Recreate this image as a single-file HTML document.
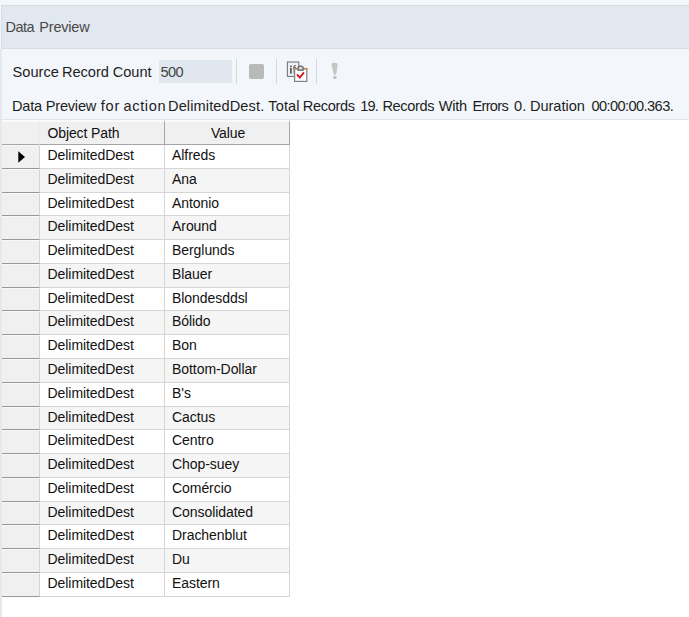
<!DOCTYPE html>
<html><head><meta charset="utf-8"><title>Data Preview</title>
<style>
html,body{margin:0;padding:0;}
body{width:689px;height:617px;overflow:hidden;background:#f3f6fa;font-family:"Liberation Sans",sans-serif;position:relative;}
.title{position:absolute;left:1px;top:5px;width:688px;height:44px;background:#e2e8f0;border-left:1px solid #d5dce4;border-top:1px solid #d7dde5;border-bottom:1px solid #d7dde5;box-sizing:border-box;}
.tool{position:absolute;left:1px;top:49px;width:688px;height:71px;background:#f3f6fa;border-left:1px solid #d5dce4;border-bottom:1px solid #e1e6ec;box-sizing:border-box;}
.lbl{position:absolute;left:12px;top:62.5px;font-size:14.6px;line-height:18px;color:#1e1e1e;white-space:nowrap;}
.inp{position:absolute;left:159px;top:60px;width:73px;height:23px;background:#e0e7ef;}
.inp span{position:absolute;left:1.5px;top:2.5px;font-size:14.6px;line-height:18px;color:#444;letter-spacing:-0.6px;}
.sep{position:absolute;top:59px;width:1px;height:25px;background:#d4d9df;}
.stop{position:absolute;left:249px;top:64px;width:15px;height:15px;background:#b9b9b9;border-radius:2px;}
.w{position:absolute;font-size:14.6px;line-height:18px;color:#1e1e1e;white-space:nowrap;}
.t{font-size:14.5px;color:#484848;}
.status{position:absolute;left:12px;top:96.5px;font-size:14.6px;line-height:18px;color:#1e1e1e;white-space:nowrap;letter-spacing:-0.12px;}
.grid{position:absolute;left:2px;top:120px;width:687px;height:497px;background:#fff;}
.gl{position:absolute;left:0;top:49px;width:2px;height:568px;background:#e4e9ef;}
.hdr{position:absolute;left:0;top:0;height:25px;width:288px;}
.hdr div{position:absolute;top:0;height:25px;box-sizing:border-box;background:#f0f0f0;border-top:2px solid #fafafa;border-right:1px solid #a6a6a6;border-bottom:1px solid #a6a6a6;font-size:14px;line-height:22px;color:#111;letter-spacing:-0.12px;}
.hdr .h0{left:0;width:38px;border-right-color:#ececec;}
.h1{left:38px;width:125px;padding-left:7.5px;}
.h2{left:163px;width:125px;text-align:center;padding-left:2px;}
.r{position:absolute;left:0;width:288px;}
.rh{position:absolute;left:0;top:0;width:38px;height:100%;box-sizing:border-box;background:#f0f0f0;border-top:1px solid #f9f9f9;border-right:1px solid #d4d4d4;border-bottom:1px solid #989898;}
.c{position:absolute;top:0;height:100%;box-sizing:border-box;border-right:1px solid #d6d6d6;border-bottom:1px solid #d6d6d6;font-size:14px;color:#111;letter-spacing:-0.06px;white-space:nowrap;background:#fff;}
.alt .c{background:#f5f5f5;}
.c1{left:38px;width:125px;padding-left:7.5px;}
.c2{left:163px;width:125px;padding-left:7px;}
.arr{position:absolute;left:15.5px;top:5px;}
</style></head><body>
<div class="title"></div><span class="w t" style="left:5.52px;top:18px;letter-spacing:-0.52px">Data</span><span class="w t" style="left:39.32px;top:18px;letter-spacing:-0.21px">Preview</span>
<div class="tool"></div>
<div class="gl"></div>
<span class="w" style="left:12.52px;top:62.5px;letter-spacing:0.03px">Source</span><span class="w" style="left:61.91px;top:62.5px;letter-spacing:-0.01px">Record</span><span class="w" style="left:112.77px;top:62.5px;letter-spacing:-0.04px">Count</span>
<div class="inp"><span>500</span></div>
<div class="sep" style="left:236px"></div>
<div class="stop"></div>
<div class="sep" style="left:276px"></div>
<div class="sep" style="left:315.5px"></div>
<svg style="position:absolute;left:280px;top:55px" width="65" height="35" viewBox="0 0 65 35">
<rect x="7.4" y="7" width="11.4" height="14.4" fill="#eef0f2" stroke="#737c86" stroke-width="1.1"/>
<rect x="10" y="13" width="1.8" height="5.6" fill="#5a5f66"/><rect x="10" y="10.6" width="1.8" height="1.6" fill="#5a5f66"/>
<path d="M14.2 18.6 V11.6 Q14.2 10.6 15.8 10.8 M13 13 H16" stroke="#6a7078" stroke-width="1.3" fill="none"/>
<rect x="14.6" y="13.6" width="12.2" height="12.8" fill="#fdfdfd" stroke="#7c848c" stroke-width="1.2"/>
<rect x="14.1" y="12.9" width="3.6" height="1.7" fill="#c88a4a"/><rect x="23.7" y="12.9" width="3.6" height="1.7" fill="#c88a4a"/>
<path d="M18 15.2 V13.2 Q18 11.2 20.6 11.2 Q23.2 11.2 23.2 13.2 V15.2 Z" fill="#d4d8dc" stroke="#5c626a" stroke-width="1.2"/>
<path d="M17 19.3 L19.8 22.6 L24 17.4" stroke="#d81820" stroke-width="1.9" fill="none"/>
<path d="M51.5 9.6 Q51.5 7.8 54.6 7.8 Q57.7 7.8 57.7 9.6 L56.3 19.2 Q55 20.3 53.6 19.2 Z" fill="#c6c6c6"/>
<ellipse cx="54.9" cy="22.4" rx="1.8" ry="1.5" fill="#bdbdbd"/>
</svg>
<span class="w" style="left:12.01px;top:97px;letter-spacing:-0.23px">Data</span><span class="w" style="left:45.71px;top:97px;letter-spacing:-0.21px">Preview</span><span class="w" style="left:100.81px;top:97px;letter-spacing:0.74px">for</span><span class="w" style="left:123.51px;top:97px;letter-spacing:0.62px">action</span><span class="w" style="left:168.01px;top:97px;letter-spacing:0.10px">DelimitedDest.</span><span class="w" style="left:268.36px;top:97px;letter-spacing:0.08px">Total</span><span class="w" style="left:302.81px;top:97px;letter-spacing:-0.34px">Records</span><span class="w" style="left:360.24px;top:97px;letter-spacing:-0.90px">19.</span><span class="w" style="left:382.41px;top:97px;letter-spacing:-0.35px">Records</span><span class="w" style="left:438.70px;top:97px;letter-spacing:-0.23px">With</span><span class="w" style="left:472.51px;top:97px;letter-spacing:-0.70px">Errors</span><span class="w" style="left:514.05px;top:97px;letter-spacing:0.03px">0.</span><span class="w" style="left:529.91px;top:97px;letter-spacing:-0.03px">Duration</span><span class="w" style="left:591.45px;top:97px;letter-spacing:-0.58px">00:00:00.363.</span>
<div class="grid">
<div class="hdr"><div class="h0"></div><div class="h1">Object Path</div><div class="h2">Value</div></div>
<div class="r" style="top:25px;height:24px;line-height:21px"><div class="rh"><svg class="arr" width="8" height="12" viewBox="0 0 8 12"><path d="M0.3 0.3 L7 6 L0.3 11.7 Z" fill="#000"/></svg></div><div class="c c1">DelimitedDest</div><div class="c c2">Alfreds</div></div>
<div class="r alt" style="top:49px;height:24px;line-height:21px"><div class="rh"></div><div class="c c1">DelimitedDest</div><div class="c c2">Ana</div></div>
<div class="r" style="top:73px;height:23px;line-height:20px"><div class="rh"></div><div class="c c1">DelimitedDest</div><div class="c c2">Antonio</div></div>
<div class="r alt" style="top:96px;height:24px;line-height:21px"><div class="rh"></div><div class="c c1">DelimitedDest</div><div class="c c2">Around</div></div>
<div class="r" style="top:120px;height:24px;line-height:21px"><div class="rh"></div><div class="c c1">DelimitedDest</div><div class="c c2">Berglunds</div></div>
<div class="r alt" style="top:144px;height:24px;line-height:21px"><div class="rh"></div><div class="c c1">DelimitedDest</div><div class="c c2">Blauer</div></div>
<div class="r" style="top:168px;height:23px;line-height:20px"><div class="rh"></div><div class="c c1">DelimitedDest</div><div class="c c2">Blondesddsl</div></div>
<div class="r alt" style="top:191px;height:24px;line-height:21px"><div class="rh"></div><div class="c c1">DelimitedDest</div><div class="c c2">Bólido</div></div>
<div class="r" style="top:215px;height:24px;line-height:21px"><div class="rh"></div><div class="c c1">DelimitedDest</div><div class="c c2">Bon</div></div>
<div class="r alt" style="top:239px;height:24px;line-height:21px"><div class="rh"></div><div class="c c1">DelimitedDest</div><div class="c c2">Bottom-Dollar</div></div>
<div class="r" style="top:263px;height:24px;line-height:21px"><div class="rh"></div><div class="c c1">DelimitedDest</div><div class="c c2">B's</div></div>
<div class="r alt" style="top:287px;height:23px;line-height:20px"><div class="rh"></div><div class="c c1">DelimitedDest</div><div class="c c2">Cactus</div></div>
<div class="r" style="top:310px;height:24px;line-height:21px"><div class="rh"></div><div class="c c1">DelimitedDest</div><div class="c c2">Centro</div></div>
<div class="r alt" style="top:334px;height:24px;line-height:21px"><div class="rh"></div><div class="c c1">DelimitedDest</div><div class="c c2">Chop-suey</div></div>
<div class="r" style="top:358px;height:24px;line-height:21px"><div class="rh"></div><div class="c c1">DelimitedDest</div><div class="c c2">Comércio</div></div>
<div class="r alt" style="top:382px;height:23px;line-height:20px"><div class="rh"></div><div class="c c1">DelimitedDest</div><div class="c c2">Consolidated</div></div>
<div class="r" style="top:405px;height:24px;line-height:21px"><div class="rh"></div><div class="c c1">DelimitedDest</div><div class="c c2">Drachenblut</div></div>
<div class="r alt" style="top:429px;height:24px;line-height:21px"><div class="rh"></div><div class="c c1">DelimitedDest</div><div class="c c2">Du</div></div>
<div class="r" style="top:453px;height:24px;line-height:21px"><div class="rh"></div><div class="c c1">DelimitedDest</div><div class="c c2">Eastern</div></div>
</div>
</body></html>
